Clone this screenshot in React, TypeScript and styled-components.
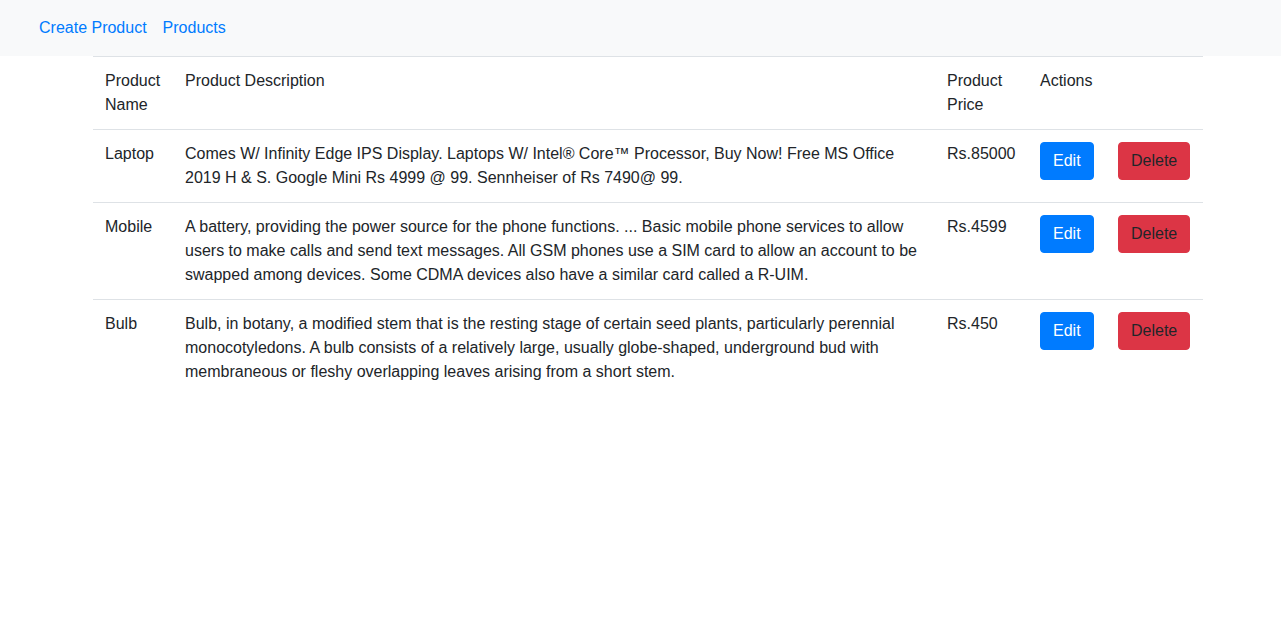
import React from "react";
import styled, { createGlobalStyle } from "styled-components";

const Global = createGlobalStyle`
  html, body { margin: 0; padding: 0; background: #fff; }
  body {
    font-family: "Liberation Sans", Arial, Helvetica, sans-serif;
    font-size: 16px;
    line-height: 1.5;
    color: #212529;
  }
  * { box-sizing: border-box; }
`;

const Navbar = styled.nav`
  display: flex;
  align-items: center;
  height: 56px;
  padding: 8px 16px 8px 31px;
  background: #f8f9fa;
`;

const NavLink = styled.a`
  display: block;
  padding: 8px;
  color: #007bff;
  text-decoration: none;
  cursor: pointer;
`;

const Container = styled.div`
  width: 1110px;
  margin-left: 93px;
`;

const Table = styled.table`
  width: 100%;
  border-collapse: collapse;
  color: #212529;
`;

const Th = styled.th<{ $w?: number }>`
  text-align: left;
  font-weight: 400;
  vertical-align: top;
  padding: 12px;
  border-top: 1px solid #dee2e6;
  border-bottom: 1px solid #dee2e6;
  width: ${(p) => (p.$w ? `${p.$w}px` : "auto")};
`;

const Td = styled.td`
  vertical-align: top;
  padding: 12px;
  border-top: 1px solid #dee2e6;
`;

const Button = styled.button<{ $variant: "primary" | "danger" }>`
  display: inline-block;
  font-family: inherit;
  font-size: 16px;
  line-height: 24px;
  padding: 6px 12px;
  border-radius: 4px;
  border: 1px solid ${(p) => (p.$variant === "primary" ? "#007bff" : "#dc3545")};
  background: ${(p) => (p.$variant === "primary" ? "#007bff" : "#dc3545")};
  color: ${(p) => (p.$variant === "primary" ? "#fff" : "#212529")};
  cursor: pointer;
`;

const products = [
  {
    name: "Laptop",
    desc: "Comes W/ Infinity Edge IPS Display. Laptops W/ Intel® Core™ Processor, Buy Now! Free MS Office 2019 H & S. Google Mini Rs 4999 @ 99. Sennheiser of Rs 7490@ 99.",
    price: "Rs.85000",
  },
  {
    name: "Mobile",
    desc: "A battery, providing the power source for the phone functions. ... Basic mobile phone services to allow users to make calls and send text messages. All GSM phones use a SIM card to allow an account to be swapped among devices. Some CDMA devices also have a similar card called a R-UIM.",
    price: "Rs.4599",
  },
  {
    name: "Bulb",
    desc: "Bulb, in botany, a modified stem that is the resting stage of certain seed plants, particularly perennial monocotyledons. A bulb consists of a relatively large, usually globe-shaped, underground bud with membraneous or fleshy overlapping leaves arising from a short stem.",
    price: "Rs.450",
  },
];

export default function App() {
  return (
    <>
      <Global />
      <Navbar>
        <NavLink>Create Product</NavLink>
        <NavLink>Products</NavLink>
      </Navbar>
      <Container>
        <Table>
          <thead>
            <tr>
              <Th $w={80}>Product Name</Th>
              <Th $w={762}>Product Description</Th>
              <Th $w={93}>Product Price</Th>
              <Th colSpan={2}>Actions</Th>
            </tr>
          </thead>
          <tbody>
            {products.map((p) => (
              <tr key={p.name}>
                <Td>{p.name}</Td>
                <Td>{p.desc}</Td>
                <Td>{p.price}</Td>
                <Td style={{ width: 78 }}>
                  <Button $variant="primary">Edit</Button>
                </Td>
                <Td>
                  <Button $variant="danger">Delete</Button>
                </Td>
              </tr>
            ))}
          </tbody>
        </Table>
      </Container>
    </>
  );
}
